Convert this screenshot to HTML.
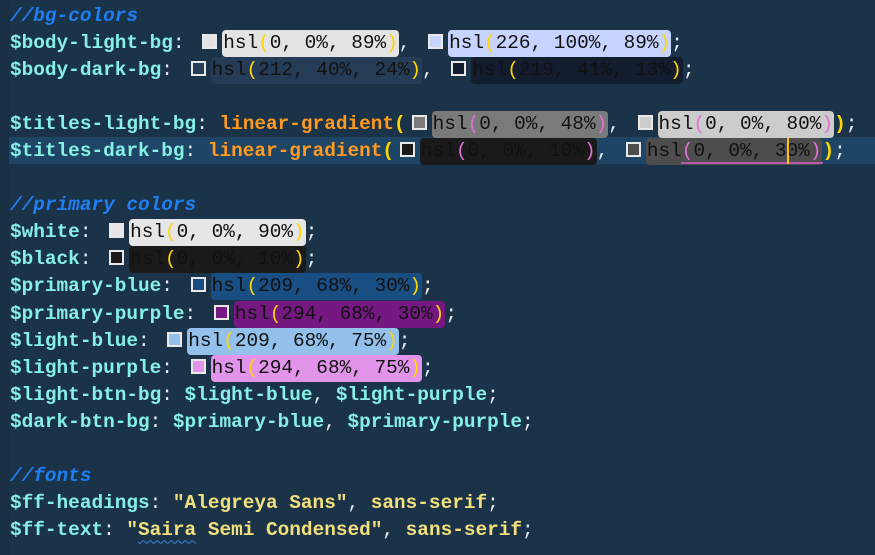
<!DOCTYPE html>
<html><head><meta charset="utf-8"><style>
html,body{margin:0;padding:0;}
body{width:875px;height:555px;background:#1b3349;overflow:hidden;position:relative;
font-family:"Liberation Mono","DejaVu Sans Mono",monospace;font-size:19.4px;color:#86efe6;font-weight:bold;}
.gut{position:absolute;left:0;top:0;width:9px;height:555px;background:#182e42;}
.sel{position:absolute;left:9px;right:0;top:137px;height:27px;background:#1f4566;}
.code{position:absolute;left:10px;top:2.5px;line-height:27.1px;}
.l{height:27.1px;white-space:pre;}
.c{color:#1e7ff2;font-style:italic;}
.o{color:#ff9a1f;}
.y{color:#ffd700;}
.m{color:#e070d8;}
.w{color:#e8eef2;font-weight:normal;}
.s{color:#f3e07c;}
.sw{display:inline-block;width:11px;height:11px;border:2px solid #e8e8e8;margin:0 5px 0 6px;vertical-align:-1px;}
.p{color:#111;border-radius:4px;padding:2px 1px 3px 1px;font-weight:normal;}
.cur{position:absolute;left:787px;top:138px;width:2px;height:26px;background:#ffc400;}
.ul{position:absolute;left:681px;top:162px;width:142px;height:2px;background:#b85aa8;}
.sq{text-decoration:underline wavy #3b82e0;text-underline-offset:4px;text-decoration-thickness:1px;}
</style></head><body>
<div class="gut"></div>
<div class="sel"></div>
<div class="code"><div class="l"><span class="c">//bg-colors</span></div><div class="l">$body-light-bg<span class="w">:</span> <span class="sw" style="background:hsl(0,0%,89%)"></span><span class="p" style="background:hsl(0,0%,89%)">hsl<span class="y">(</span>0, 0%, 89%<span class="y">)</span></span><span class="w">,</span> <span class="sw" style="background:hsl(226,100%,89%)"></span><span class="p" style="background:hsl(226,100%,89%)">hsl<span class="y">(</span>226, 100%, 89%<span class="y">)</span></span><span class="w">;</span></div><div class="l">$body-dark-bg<span class="w">:</span> <span class="sw" style="background:hsl(212,40%,24%)"></span><span class="p" style="background:hsl(212,40%,24%)">hsl<span class="y">(</span>212, 40%, 24%<span class="y">)</span></span><span class="w">,</span> <span class="sw" style="background:hsl(219,41%,13%)"></span><span class="p" style="background:hsl(219,41%,13%)">hsl<span class="y">(</span>219, 41%, 13%<span class="y">)</span></span><span class="w">;</span></div><div class="l"> </div><div class="l">$titles-light-bg<span class="w">:</span> <span class="o">linear-gradient</span><span class="y">(</span><span class="sw" style="background:hsl(0,0%,48%)"></span><span class="p" style="background:hsl(0,0%,48%)">hsl<span class="m">(</span>0, 0%, 48%<span class="m">)</span></span><span class="w">,</span> <span class="sw" style="background:hsl(0,0%,80%)"></span><span class="p" style="background:hsl(0,0%,80%)">hsl<span class="m">(</span>0, 0%, 80%<span class="m">)</span></span><span class="y">)</span><span class="w">;</span></div><div class="l">$titles-dark-bg<span class="w">:</span> <span class="o">linear-gradient</span><span class="y">(</span><span class="sw" style="background:hsl(0,0%,10%)"></span><span class="p" style="background:hsl(0,0%,10%)">hsl<span class="m">(</span>0, 0%, 10%<span class="m">)</span></span><span class="w">,</span> <span class="sw" style="background:hsl(0,0%,30%)"></span><span class="p" style="background:hsl(0,0%,30%)">hsl<span class="m">(</span>0, 0%, 30%<span class="m">)</span></span><span class="y">)</span><span class="w">;</span></div><div class="l"> </div><div class="l"><span class="c">//primary colors</span></div><div class="l">$white<span class="w">:</span> <span class="sw" style="background:hsl(0,0%,90%)"></span><span class="p" style="background:hsl(0,0%,90%)">hsl<span class="y">(</span>0, 0%, 90%<span class="y">)</span></span><span class="w">;</span></div><div class="l">$black<span class="w">:</span> <span class="sw" style="background:hsl(0,0%,10%)"></span><span class="p" style="background:hsl(0,0%,10%)">hsl<span class="y">(</span>0, 0%, 10%<span class="y">)</span></span><span class="w">;</span></div><div class="l">$primary-blue<span class="w">:</span> <span class="sw" style="background:hsl(209,68%,30%)"></span><span class="p" style="background:hsl(209,68%,30%)">hsl<span class="y">(</span>209, 68%, 30%<span class="y">)</span></span><span class="w">;</span></div><div class="l">$primary-purple<span class="w">:</span> <span class="sw" style="background:hsl(294,68%,30%)"></span><span class="p" style="background:hsl(294,68%,30%)">hsl<span class="y">(</span>294, 68%, 30%<span class="y">)</span></span><span class="w">;</span></div><div class="l">$light-blue<span class="w">:</span> <span class="sw" style="background:hsl(209,68%,75%)"></span><span class="p" style="background:hsl(209,68%,75%)">hsl<span class="y">(</span>209, 68%, 75%<span class="y">)</span></span><span class="w">;</span></div><div class="l">$light-purple<span class="w">:</span> <span class="sw" style="background:hsl(294,68%,75%)"></span><span class="p" style="background:hsl(294,68%,75%)">hsl<span class="y">(</span>294, 68%, 75%<span class="y">)</span></span><span class="w">;</span></div><div class="l">$light-btn-bg<span class="w">:</span> $light-blue<span class="w">,</span> $light-purple<span class="w">;</span></div><div class="l">$dark-btn-bg<span class="w">:</span> $primary-blue<span class="w">,</span> $primary-purple<span class="w">;</span></div><div class="l"> </div><div class="l"><span class="c">//fonts</span></div><div class="l">$ff-headings<span class="w">:</span> <span class="s">"Alegreya Sans"</span><span class="w">,</span> <span class="s">sans-serif</span><span class="w">;</span></div><div class="l">$ff-text<span class="w">:</span> <span class="s">"<span class="sq">Saira</span> Semi Condensed"</span><span class="w">,</span> <span class="s">sans-serif</span><span class="w">;</span></div></div>
<div class="ul"></div>
<div class="cur"></div>
</body></html>
